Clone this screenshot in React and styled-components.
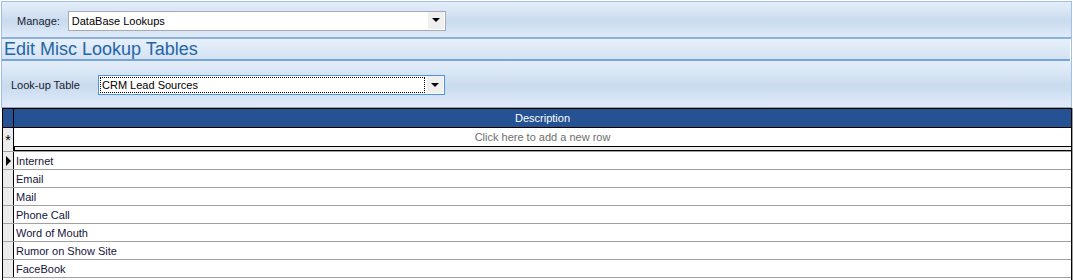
import React from "react"
import styled, { createGlobalStyle } from "styled-components"

const Global = createGlobalStyle`
  body {
    margin: 0;
    background: #fff;
    font-family: "Liberation Sans", Arial, sans-serif;
    font-size: 11px;
  }
`

const Page = styled.div`
  width: 1073px;
  height: 280px;
  padding: 1px 0 0 1px;
  box-sizing: border-box;
  overflow: hidden;
  display: flex;
  flex-direction: column;
`

const Panels = styled.div`
  margin-right: 1px;
  border-left: 1px solid #a3bde4;
  border-right: 1px solid #a3bde4;
  display: flex;
  flex-direction: column;
`

const panelBg = `linear-gradient(180deg, #e4eefa 0%, #d6e4f4 30%, #c9dbef 55%, #d6e4f5 80%, #e0ebfa 100%)`

const TopBar = styled.div`
  height: 38px;
  border-top: 1px solid #a3bde4;
  border-bottom: 2px solid #8db0e0;
  background: ${panelBg};
  display: flex;
  align-items: center;
  padding: 2px 0 0 15px;
  box-sizing: border-box;
  gap: 8px;
`

const TitleBar = styled.div`
  height: 20px;
  border-bottom: 2px solid #78a6d3;
  background: linear-gradient(180deg, #e7f0fb 0%, #dce8f7 60%, #d3e2f3 100%);
  display: flex;
  align-items: center;
  padding-left: 2px;
  margin-right: 1px;
`

const Title = styled.h1`
  margin: 0;
  font-size: 18px;
  font-weight: normal;
  color: #2565a6;
  line-height: 20px;
`

const FilterPanel = styled.div`
  height: 47px;
  border-bottom: 1px solid #9aa3ad;
  background: ${panelBg};
  display: flex;
  align-items: center;
  padding: 2px 0 0 9px;
  box-sizing: border-box;
`

const Label = styled.span`
  color: #1b1b2e;
  width: ${(p) => p.$width || "auto"};
`

const Select = styled.div`
  width: ${(p) => p.$width};
  height: 18px;
  background: #fff;
  border: 1px solid ${(p) => (p.$focused ? "#4d94e6" : "#a4abb5")};
  display: flex;
  align-items: stretch;
`

const SelectText = styled.div`
  flex: 1;
  display: flex;
  align-items: center;
  padding-left: 1px;
  margin: 1px 2px 1px 1px;
  color: #000;
  border: 1px dotted ${(p) => (p.$focused ? "#000" : "transparent")};
`

const Arrow = styled.div`
  width: 16px;
  margin: 0 1px 1px 0;
  background: #efefef;
  display: flex;
  align-items: center;
  justify-content: center;
  &::after {
    content: "";
    border-left: 4px solid transparent;
    border-right: 4px solid transparent;
    border-top: 4px solid #000;
  }
`

const GridOuter = styled.div`
  margin-left: 1px;
  border-right: 1px solid #a0a0a0;
  flex: 1;
`

const Grid = styled.div`
  border-left: 1px solid #000;
  border-right: 1px solid #000;
  border-top: 1px solid #000;
  height: 100%;
`

const Row = styled.div`
  display: flex;
  height: ${(p) => p.$height || "17px"};
  border-bottom: 1px solid ${(p) => p.$line || "#a0a0a0"};
  background: ${(p) => p.$bg || "#fff"};
`

const Indicator = styled.div`
  width: 10px;
  border-right: 1px solid #000;
  background: ${(p) => p.$bg || "#ececec"};
  display: flex;
  align-items: center;
  justify-content: center;
  font-size: 14px;
  color: #000;
`

const Cell = styled.div`
  flex: 1;
  display: flex;
  align-items: center;
  justify-content: ${(p) => (p.$center ? "center" : "flex-start")};
  padding-left: ${(p) => (p.$center ? "0" : "2px")};
  color: ${(p) => p.$color || "#14143c"};
`

const NewCell = styled.div`
  flex: 1;
  display: flex;
  flex-direction: column;
`

const NewText = styled.div`
  height: 18px;
  display: flex;
  align-items: center;
  justify-content: center;
  color: #6e6e6e;
`

const Strip = styled.div`
  height: 3px;
  background: #eeeeee;
  border-top: 1px solid #000;
  border-bottom: 1px solid #000;
  border-left: 1px solid #000;
`

const Pointer = styled.span`
  width: 0;
  height: 0;
  border-top: 5px solid transparent;
  border-bottom: 5px solid transparent;
  border-left: 5px solid #000;
  margin-left: 1px;
`

const rows = [
  "Internet",
  "Email",
  "Mail",
  "Phone Call",
  "Word of Mouth",
  "Rumor on Show Site",
  "FaceBook",
]

const Dropdown = ({ width, value, focused }) => (
  <Select $width={width} $focused={focused}>
    <SelectText $focused={focused}>{value}</SelectText>
    <Arrow />
  </Select>
)

const App = () => (
  <Page>
    <Global />
    <Panels>
      <TopBar>
        <Label>Manage:</Label>
        <Dropdown width="376px" value="DataBase Lookups" />
      </TopBar>
      <TitleBar>
        <Title>Edit Misc Lookup Tables</Title>
      </TitleBar>
      <FilterPanel>
        <Label $width="87px">Look-up Table</Label>
        <Dropdown width="345px" value="CRM Lead Sources" focused />
      </FilterPanel>
    </Panels>
    <GridOuter>
      <Grid>
        <Row $height="18px" $bg="#245293" $line="#000">
          <Indicator $bg="#245293" />
          <Cell $center $color="#fff">Description</Cell>
        </Row>
        <Row $height="23px" $line="#a0a0a0">
          <Indicator>*</Indicator>
          <NewCell>
            <NewText>Click here to add a new row</NewText>
            <Strip />
          </NewCell>
        </Row>
        {rows.map((r, i) => (
          <Row key={r}>
            <Indicator>{i === 0 && <Pointer />}</Indicator>
            <Cell>{r}</Cell>
          </Row>
        ))}
      </Grid>
    </GridOuter>
  </Page>
)

export default App
